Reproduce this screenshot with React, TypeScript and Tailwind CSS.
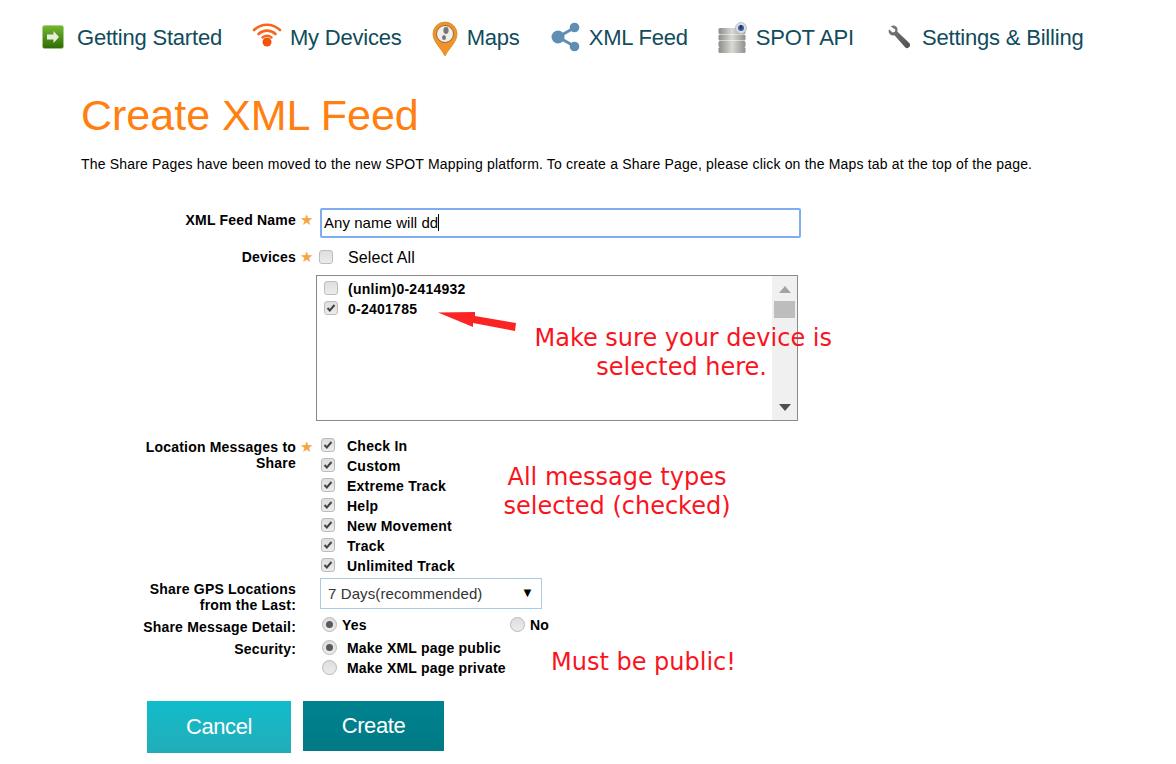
function GreenArrow() {
  return (
    <svg width="22" height="24" viewBox="0 0 22 24">
      <defs>
        <linearGradient id="ga" x1="0" y1="0" x2="0" y2="1">
          <stop offset="0" stopColor="#74b82e" />
          <stop offset="1" stopColor="#2f6b05" />
        </linearGradient>
      </defs>
      <rect x="0.5" y="0.5" width="21" height="23" rx="2" fill="url(#ga)" stroke="#a9c890" strokeWidth="0.6" />
      <path d="M5 9.500h6.500V6l5.500 6-5.500 6v-3.500H5z" fill="#e9eee2" />
    </svg>
  );
}

function WifiIcon() {
  return (
    <svg className="overflow-visible" width="30" height="26" viewBox="0 3 30 26" fill="none" stroke="#f5661b" strokeLinecap="round">
      <path d="M2 9C9.500 2 20.500 2 28 9" strokeWidth="2.600" />
      <path d="M6.500 13C11.500 8.500 18.500 8.500 23.500 13" strokeWidth="2.600" />
      <path d="M10.500 16.500C13.500 14.200 16.500 14.200 19.500 16.500" strokeWidth="2.400" />
      <circle cx="15" cy="21" r="4.500" fill="#f4540a" stroke="none" />
    </svg>
  );
}

function PinIcon() {
  return (
    <svg className="mt-[4px]" width="26" height="36" viewBox="0 0 26 36">
      <path d="M13 35C9 27 1 21 1 13a12 12 0 0 1 24 0c0 8-8 14-12 22z" fill="#f0942a" stroke="#d98420" strokeWidth="0.8" />
      <circle cx="13" cy="13" r="8.500" fill="#f3efe8" stroke="#8d6a3f" strokeWidth="1" />
      <ellipse cx="14" cy="9.500" rx="2.600" ry="3.400" fill="#77777a" />
      <ellipse cx="12" cy="16.500" rx="2" ry="2.600" fill="#77777a" />
    </svg>
  );
}

function ShareIcon() {
  return (
    <svg width="30" height="30" viewBox="0 0 30 30" fill="#5f8db3">
      <path d="M7 15L23 6M7 15l16 9" stroke="#5f8db3" strokeWidth="3" />
      <circle cx="7" cy="15" r="6.500" />
      <circle cx="23.500" cy="5.500" r="4.800" />
      <circle cx="23.500" cy="24.500" r="4.800" />
    </svg>
  );
}

function DatabaseIcon() {
  return (
    <svg width="30" height="32" viewBox="0 0 30 32">
      <defs>
        <linearGradient id="db" x1="0" y1="0" x2="1" y2="0">
          <stop offset="0" stopColor="#8b8b88" />
          <stop offset="0.5" stopColor="#d9d9d6" />
          <stop offset="1" stopColor="#8f8f8c" />
        </linearGradient>
      </defs>
      <rect x="0.500" y="7" width="27" height="6" rx="1.500" fill="url(#db)" />
      <rect x="0.500" y="13.500" width="27" height="6" rx="1.500" fill="url(#db)" />
      <rect x="0.500" y="20" width="27" height="6" rx="1.500" fill="url(#db)" />
      <rect x="0.500" y="26" width="27" height="6" rx="1.500" fill="url(#db)" />
      <circle cx="23" cy="7" r="5.500" fill="#d8dde8" stroke="#b5b8c0" strokeWidth="0.8" />
      <circle cx="23" cy="7" r="3" fill="#3f5f9c" />
      <rect x="22.300" y="4" width="1.400" height="4" fill="#1a2c55" />
    </svg>
  );
}

function WrenchIcon() {
  return (
    <svg width="24" height="26" viewBox="0 0 26 28">
      <defs>
        <linearGradient id="wr" x1="0" y1="0" x2="1" y2="1">
          <stop offset="0" stopColor="#7d7d7d" />
          <stop offset="1" stopColor="#4e4e4e" />
        </linearGradient>
      </defs>
      <path d="M3 2.500c2-1.500 5-1 6.500 1 1 1.500 1 3 .5 4.500L23 20.500c1.500 1.500 1 3.500-.3 4.700-1.200 1.100-3 1.300-4.200-.2L7 12c-2 .6-4 .2-5.300-1.500C.5 8.800.4 7 1.200 5.500L5 9l2.500-.7.5-2.500z" fill="url(#wr)" />
    </svg>
  );
}

function Star() {
  return <span className="block -mt-[2px] text-[#f7a544] text-[15px] leading-[20px]">★</span>;
}

function Box({ checked = false, className = '' }: { checked?: boolean; className?: string }) {
  return (
    <span className={`relative block w-[14px] h-[14px] -mt-[3px] shrink-0 rounded-[3px] border border-[#bcbcbc] bg-gradient-to-b from-[#dedede] to-[#ececec] ${className}`}>
      {checked && (
        <svg className="absolute left-0 top-0" width="12" height="12" viewBox="0 0 12 12" fill="none">
          <path d="M2.500 6l2.300 2.500L9.500 3" stroke="#454545" strokeWidth="2" />
        </svg>
      )}
    </span>
  );
}

function Radio({ checked = false }: { checked?: boolean }) {
  return (
    <span className="flex items-center justify-center w-[15px] h-[15px] -mt-[2px] shrink-0 rounded-full border border-[#b8b8b8] bg-gradient-to-b from-[#dedede] to-[#ececec]">
      {checked && <span className="block w-[7px] h-[7px] rounded-full bg-[#5a5a5a]" />}
    </span>
  );
}

function Label({ children, star = false }: { children: React.ReactNode; star?: boolean }) {
  return (
    <div className="flex shrink-0 w-[180px]">
      <div className="w-[156px] text-right text-[14px] leading-[16px] font-bold tracking-[0.2px] text-black whitespace-nowrap">{children}</div>
      {star && <div className="ml-[4px]"><Star /></div>}
    </div>
  );
}

const navItems = [
  { label: 'Getting Started', icon: <GreenArrow />, gap: 'gap-[13px]', mr: 'mr-[30px]' },
  { label: 'My Devices', icon: <WifiIcon />, gap: 'gap-[8px]', mr: 'mr-[30px]' },
  { label: 'Maps', icon: <PinIcon />, gap: 'gap-[9px]', mr: 'mr-[31px]' },
  { label: 'XML Feed', icon: <ShareIcon />, gap: 'gap-[8px]', mr: 'mr-[30px]' },
  { label: 'SPOT API', icon: <DatabaseIcon />, gap: 'gap-[8px]', mr: 'mr-[34px]' },
  { label: 'Settings & Billing', icon: <WrenchIcon />, gap: 'gap-[10px]', mr: '' },
];

const messageTypes = ['Check In', 'Custom', 'Extreme Track', 'Help', 'New Movement', 'Track', 'Unlimited Track'];

export default function App() {
  return (
    <div className="relative w-[1176px] h-[764px] overflow-hidden bg-white font-['Liberation_Sans',Arial,sans-serif] text-black">
      {/* top nav */}
      <nav className="flex items-center h-[38px] mt-[18px] pl-[42px]">
        {navItems.map((item) => (
          <div key={item.label} className={`flex items-center ${item.gap} ${item.mr}`}>
            {item.icon}
            <span className="text-[22px] tracking-[-0.2px] text-[#0f4c5c] whitespace-nowrap">{item.label}</span>
          </div>
        ))}
      </nav>

      <main className="pl-[81px]">
        <h1 className="mt-[31px] text-[43px] leading-[56px] text-[#ff7f11]">Create XML Feed</h1>
        <p className="mt-[12px] text-[14px] leading-[18px] tracking-[0.18px]">
          The Share Pages have been moved to the new SPOT Mapping platform. To create a Share Page, please click on the Maps tab at the top of the page.
        </p>

        <form className="mt-[35px] ml-[59px]">
          <div className="flex">
            <div className="pt-[4px]"><Label star>XML Feed Name</Label></div>
            <div className="flex items-center w-[481px] h-[30px] pl-[2px] pb-[2px] border-2 border-[#7eaef0] rounded-[2px] text-[15px] tracking-[0.05px] leading-none">
              Any name will dd<span className="inline-block w-px h-[17px] bg-black" />
            </div>
          </div>

          <div className="flex items-start mt-[10px]">
            <div className="pt-[1px]"><Label star>Devices</Label></div>
            <div className="pt-[5px]"><Box className="-ml-[1px]" /></div>
            <span className="ml-[15px] text-[16px] leading-[20px] tracking-[0.1px]">Select All</span>
          </div>

          {/* device list */}
          <div className="flex ml-[176px] mt-[7px] w-[482px] h-[146px] border border-[#8a8a8a]">
            <div className="flex-1 pt-[3px] pl-[7px]">
              <div className="flex items-center h-[20px] gap-[10px] text-[14px] font-bold tracking-[0.25px]">
                <Box />
                <span>(unlim)0-2414932</span>
              </div>
              <div className="flex items-center h-[20px] gap-[10px] text-[14px] font-bold tracking-[0.25px]">
                <Box checked />
                <span>0-2401785</span>
              </div>
            </div>
            <div className="flex flex-col items-center w-[25px] h-full bg-[#f0f0f0]">
              <svg className="mt-[10px]" width="12" height="7" viewBox="0 0 12 7"><path d="M6 0l6 7H0z" fill="#a3a3a3" /></svg>
              <span className="block w-[21px] h-[17px] mt-[8px] bg-[#bdbdbd]" />
              <svg className="mt-auto mb-[9px]" width="12" height="7" viewBox="0 0 12 7"><path d="M6 7L0 0h12z" fill="#505050" /></svg>
            </div>
          </div>

          <div className="flex mt-[15px]">
            <div className="pt-[3px]"><Label star>Location Messages to<br />Share</Label></div>
            <div className="ml-[-2px] pl-[3px]">
              {messageTypes.map((type) => (
                <div key={type} className="flex items-center h-[20px] gap-[12px] text-[14px] font-bold tracking-[0.25px]">
                  <Box checked />
                  <span>{type}</span>
                </div>
              ))}
            </div>
          </div>

          <div className="flex mt-[2px]">
            <div className="pt-[3px]"><Label>Share GPS Locations<br />from the Last:</Label></div>
            <div className="flex items-center justify-between w-[222px] h-[31px] pl-[7px] pr-[7px] border border-[#a8cce4] text-[15px] tracking-[0.1px] text-[#333333]">
              <span className="pt-[1px]">7 Days(recommended)</span>
              <span className="-mt-[1px] text-[13px] text-black">▼</span>
            </div>
          </div>

          <div className="flex items-center h-[20px] mt-[2px]">
            <div className="pt-[4px]"><Label>Share Message Detail:</Label></div>
            <div className="flex items-center w-[190px] gap-[5px] pl-[2px] text-[14px] font-bold tracking-[0.25px]">
              <Radio checked />
              <span>Yes</span>
            </div>
            <div className="flex items-center gap-[5px] text-[14px] font-bold tracking-[0.25px]">
              <Radio />
              <span>No</span>
            </div>
          </div>

          <div className="flex mt-[3px]">
            <div className="pt-[3px]"><Label>Security:</Label></div>
            <div className="pl-[2px]">
              <div className="flex items-center h-[20px] gap-[10px] text-[14px] font-bold tracking-[0.2px]">
                <Radio checked />
                <span>Make XML page public</span>
              </div>
              <div className="flex items-center h-[20px] gap-[10px] text-[14px] font-bold tracking-[0.2px]">
                <Radio />
                <span>Make XML page private</span>
              </div>
            </div>
          </div>

          <div className="flex items-start gap-[12px] mt-[23px] ml-[7px]">
            <button type="button" className="w-[144px] h-[52px] pb-[1px] text-[22px] tracking-[-0.4px] text-white bg-gradient-to-b from-[#0fbccb] to-[#22adb8]">Cancel</button>
            <button type="button" className="w-[141px] h-[50px] pb-[1px] text-[22px] tracking-[-0.4px] text-white bg-gradient-to-b from-[#00838f] to-[#007a85]">Create</button>
          </div>
        </form>
      </main>

      {/* annotations drawn over the form */}
      <svg className="absolute left-[436px] top-[306px]" width="84" height="26" viewBox="0 0 84 26">
        <path d="M2 6.500L39 6l0 4L80 17l-1 8L37 17l0 4z" fill="#fb2424" />
      </svg>
      <div className="absolute left-[532px] top-[324px] w-[300px] text-right text-[24px] leading-[29px] text-[#f9141e] font-['DejaVu_Sans',sans-serif]">
        <div>Make sure your device is</div>
        <div className="pr-[65px]">selected here.</div>
      </div>
      <div className="absolute left-[500px] top-[463px] w-[234px] text-center text-[24px] leading-[29px] text-[#f9141e] font-['DejaVu_Sans',sans-serif]">
        <div>All message types</div>
        <div>selected (checked)</div>
      </div>
      <div className="absolute left-[551px] top-[648px] text-[24px] leading-[29px] text-[#f9141e] font-['DejaVu_Sans',sans-serif]">Must be public!</div>
    </div>
  );
}
